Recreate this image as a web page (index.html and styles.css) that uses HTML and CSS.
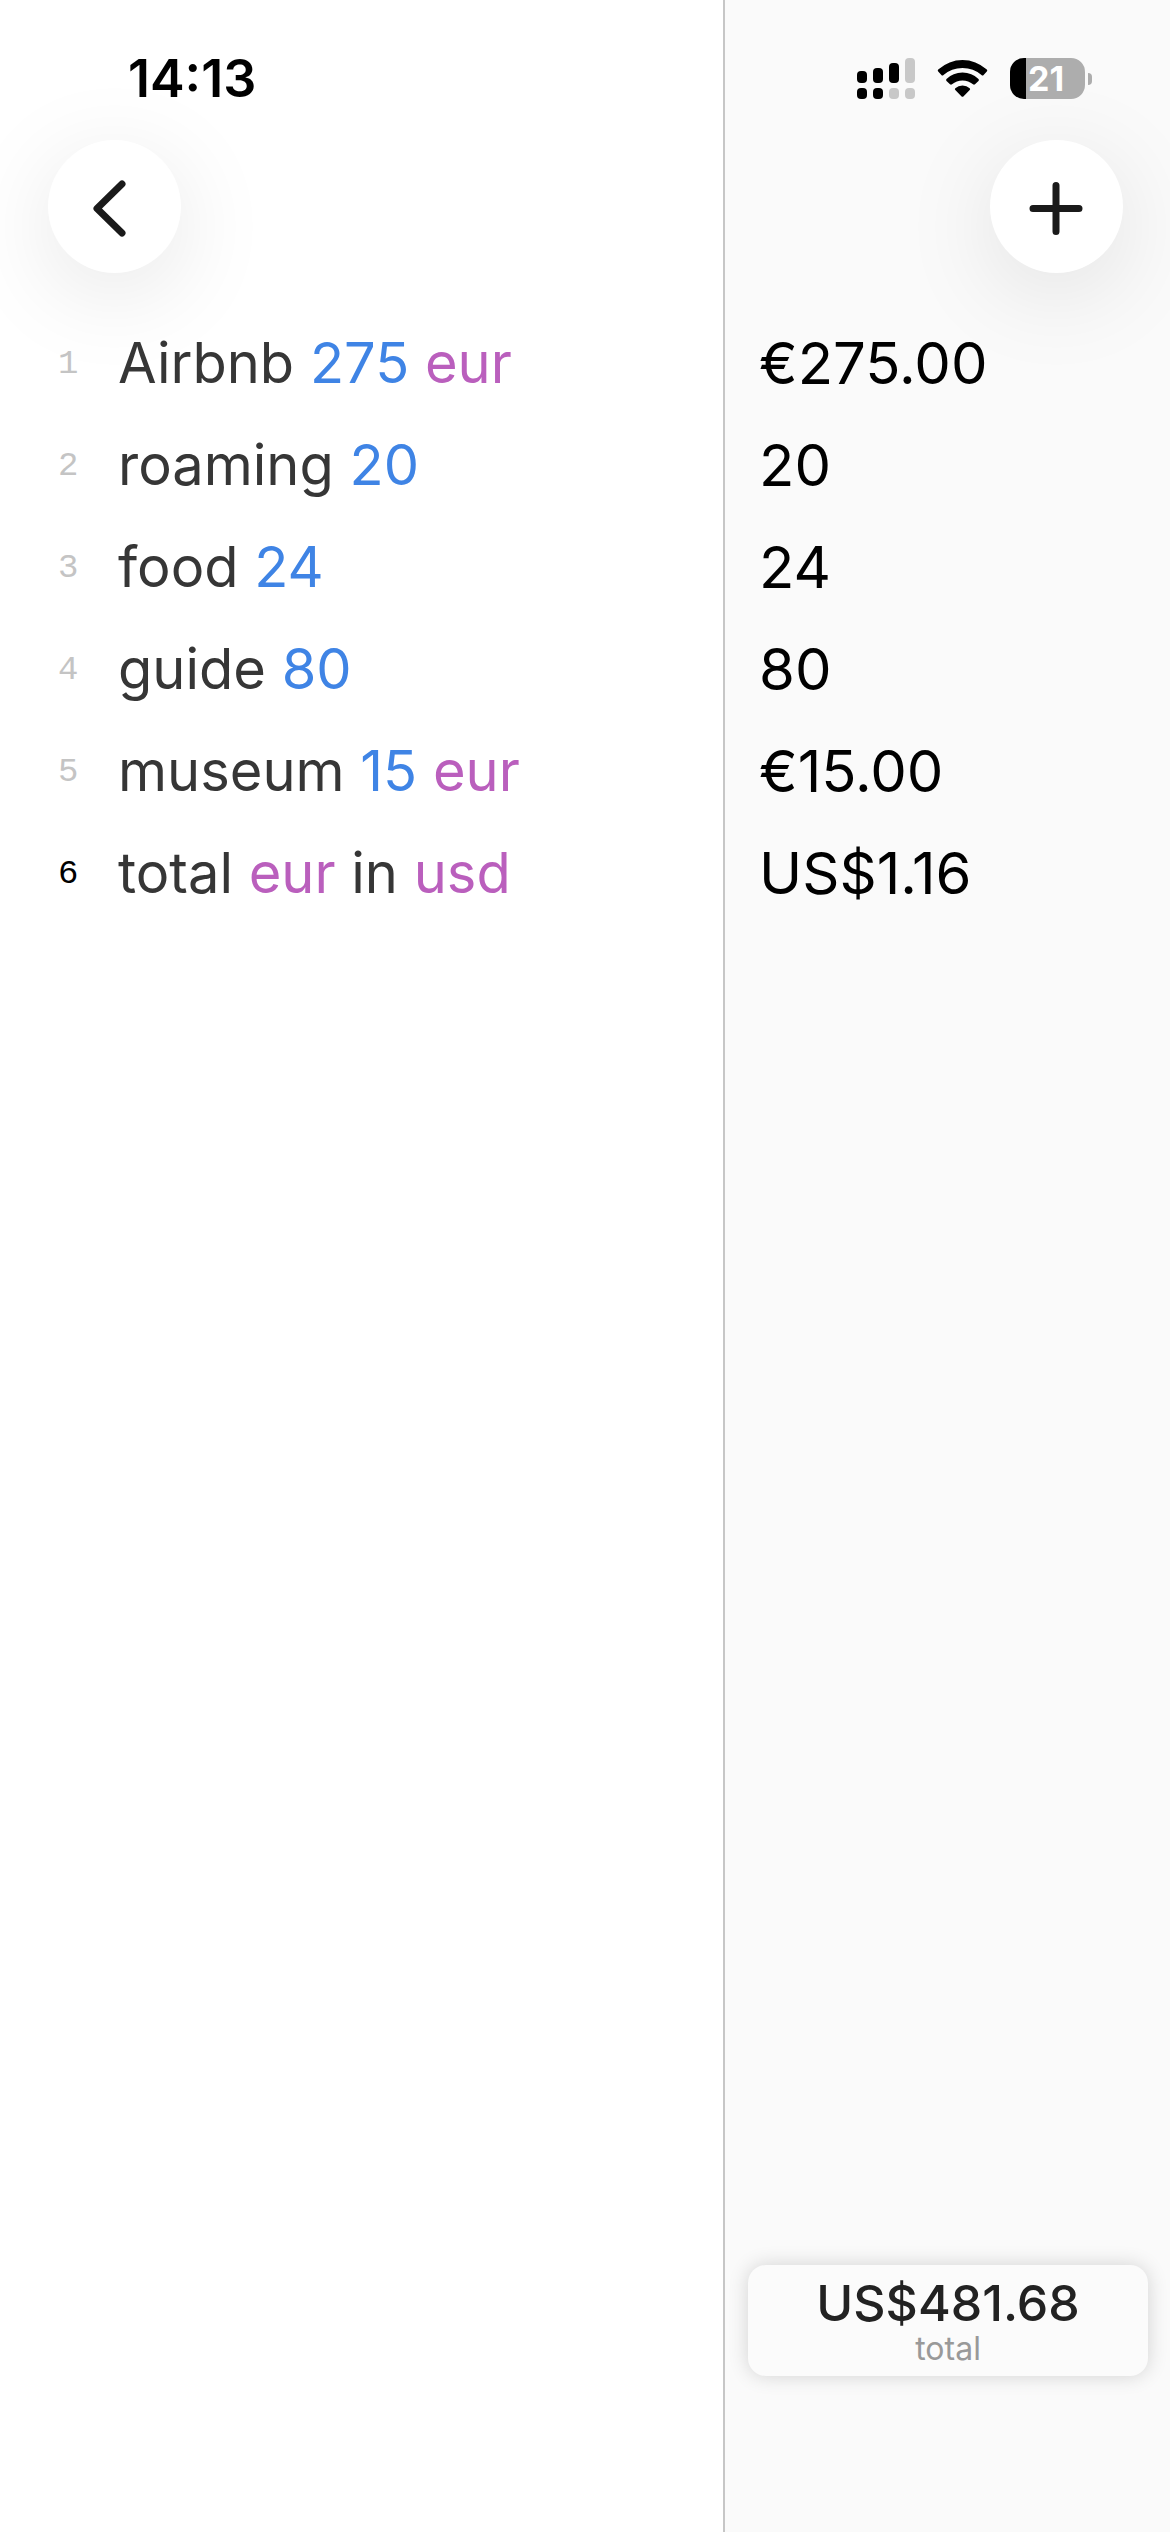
FILE: index.html
```html
<!DOCTYPE html>
<html lang="en">
<head>
    <meta charset="UTF-8">
    <meta name="viewport" content="width=device-width, initial-scale=1">
    <title>Calculator note</title>
    <link rel="stylesheet" href="styles.css">
</head>
<body>
    <div id="app">
        <main class="pane editor">
            <div class="statusbar">
                <time class="clock">14:13</time>
            </div>
            <div class="toolbar">
                <button class="round-btn" type="button" aria-label="Back">
                    <svg width="60" height="60" viewBox="0 0 60 60"><path d="M37 7L12 31.500L37 56" /></svg>
                </button>
            </div>
            <ol class="lines">
                <li><span class="num">1</span><span>Airbnb <b class="value">275</b> <b class="unit">eur</b></span></li>
                <li><span class="num">2</span><span>roaming <b class="value">20</b></span></li>
                <li><span class="num">3</span><span>food <b class="value">24</b></span></li>
                <li><span class="num">4</span><span>guide <b class="value">80</b></span></li>
                <li><span class="num">5</span><span>museum <b class="value">15</b> <b class="unit">eur</b></span></li>
                <li class="current"><span class="num">6</span><span>total <b class="unit">eur</b> in <b class="unit">usd</b></span></li>
            </ol>
        </main>

        <aside class="pane results">
            <div class="statusbar status-icons">
                <svg width="58" height="41" viewBox="0 0 58 41">
                    <rect x="0" y="13" width="10" height="12" rx="4" />
                    <rect x="16" y="10" width="10" height="15" rx="4" />
                    <rect x="32" y="5" width="10" height="20" rx="4" />
                    <rect class="off" x="48" y="0" width="10" height="25" rx="4" />
                    <rect x="0" y="30" width="10" height="11" rx="4" />
                    <rect x="16" y="30" width="10" height="11" rx="4" />
                    <rect class="off" x="32" y="30" width="10" height="11" rx="4" />
                    <rect class="off" x="48" y="30" width="10" height="11" rx="4" />
                </svg>
                <svg width="51" height="41" viewBox="0 0 51 41">
                    <path d="M1.200 11.600Q.2 12.600 1.200 13.600L4.400 17Q5.400 18 6.500 17Q14.500 10 25.500 10T44.500 17Q45.600 18 46.600 17L49.800 13.600Q50.800 12.600 49.800 11.600Q39 2 25.500 2T1.200 11.600Z" />
                    <path d="M9.500 21Q8.600 22 9.500 22.900L13 26.300Q14 27.200 15 26.300Q19.500 22.500 25.500 22.500T36 26.300Q37 27.200 38 26.300L41.500 22.900Q42.400 22 41.500 21Q35 14.500 25.500 14.500T9.500 21Z" />
                    <path d="M18.300 30.300Q17.400 31.200 18.300 32.100L24.600 38.400Q25.500 39.300 26.400 38.400L32.700 32.100Q33.600 31.200 32.700 30.300Q29.700 27.500 25.500 27.500T18.300 30.300Z" />
                </svg>
                <div class="battery"><span>21</span></div>
            </div>
            <div class="toolbar toolbar-end">
                <button class="round-btn" type="button" aria-label="New note">
                    <svg width="60" height="60" viewBox="0 0 60 60"><path d="M6 31.500H52M29 8.500V54.500" /></svg>
                </button>
            </div>
            <ol class="answers">
                <li>€275.00</li>
                <li>20</li>
                <li>24</li>
                <li>80</li>
                <li>€15.00</li>
                <li>US$1.16</li>
            </ol>
            <button class="total" type="button">
                <strong>US$481.68</strong>
                <small>total</small>
            </button>
        </aside>
    </div>
</body>
</html>
```

FILE: styles.css
```css
*{
    margin: 0;
    padding: 0;
    box-sizing: border-box;
}
body{
    font-family: Inter, "Liberation Sans", sans-serif;
    color: #000;
    background: #fff;
}
#app{
    display: grid;
    grid-template-columns: 1fr 38.2%;
    min-height: 100vh;
}
.pane{
    display: flex;
    flex-direction: column;
    overflow: hidden;
}
.results{
    background: #fafafa;
    border-left: 2px solid #c6c6c6;
}

/* status bar */
.statusbar{
    display: flex;
    align-items: center;
    height: 140px;
    padding: 16px 78px 0 128px;
}
.clock{
    font-size: 52px;
    font-weight: 600;
}
.status-icons{
    justify-content: flex-end;
    gap: 22px;
}
.status-icons .off{
    fill: #c8c8c8;
}
.battery{
    position: relative;
    width: 75px;
    height: 41px;
    margin-right: 7px;
    padding-left: 18px;
    border-radius: 14px;
    background: linear-gradient(to right, #000 16px, #adadad 16px);
    color: #fff;
    font-size: 34px;
    font-weight: 700;
    line-height: 41px;
}
.battery::after{
    content: "";
    position: absolute;
    top: 15px;
    right: -7px;
    width: 4px;
    height: 12px;
    border-radius: 0 4px 4px 0;
    background: #adadad;
}

/* toolbar */
.toolbar{
    display: flex;
    padding: 0 47px 0 48px;
}
.toolbar-end{
    justify-content: flex-end;
}
.round-btn{
    display: flex;
    align-items: center;
    justify-content: center;
    width: 133px;
    height: 133px;
    border: none;
    border-radius: 50%;
    background: #fff;
    box-shadow: 0 20px 96px rgba(0, 0, 0, .1);
}
.round-btn path{
    fill: none;
    stroke: #1a1a1a;
    stroke-width: 7;
    stroke-linecap: round;
    stroke-linejoin: round;
}

/* lines and their answers */
.lines, .answers{
    flex: 1;
    padding-top: 39px;
    list-style: none;
    font-size: 58px;
    line-height: 102px;
    white-space: nowrap;
}
.lines{
    color: #363636;
    font-size: 56px;
}
.lines li{
    display: grid;
    grid-template-columns: 60px 1fr;
    padding-left: 58px;
}
.lines b{
    font-weight: 400;
}
.num{
    padding-top: 22px;
    color: #c4c4c4;
    font-family: "Liberation Mono", monospace;
    font-size: 34px;
    line-height: 60px;
}
.current .num{
    color: #000;
}
.lines .value{
    color: #3f84e5;
}
.lines .unit{
    color: #ba5fbd;
}
.answers{
    padding-left: 34px;
}

/* total card */
.total{
    display: flex;
    flex-direction: column;
    align-items: center;
    justify-content: center;
    height: 111px;
    margin: 0 22px 156px 23px;
    border: none;
    border-radius: 18px;
    background: #fbfbfb;
    box-shadow: 0 0 20px rgba(0, 0, 0, .16);
    font-family: inherit;
}
.total strong{
    color: #222;
    font-size: 50px;
    font-weight: 500;
    line-height: 56px;
}
.total small{
    color: #999;
    font-size: 32px;
    line-height: 36px;
}
```
